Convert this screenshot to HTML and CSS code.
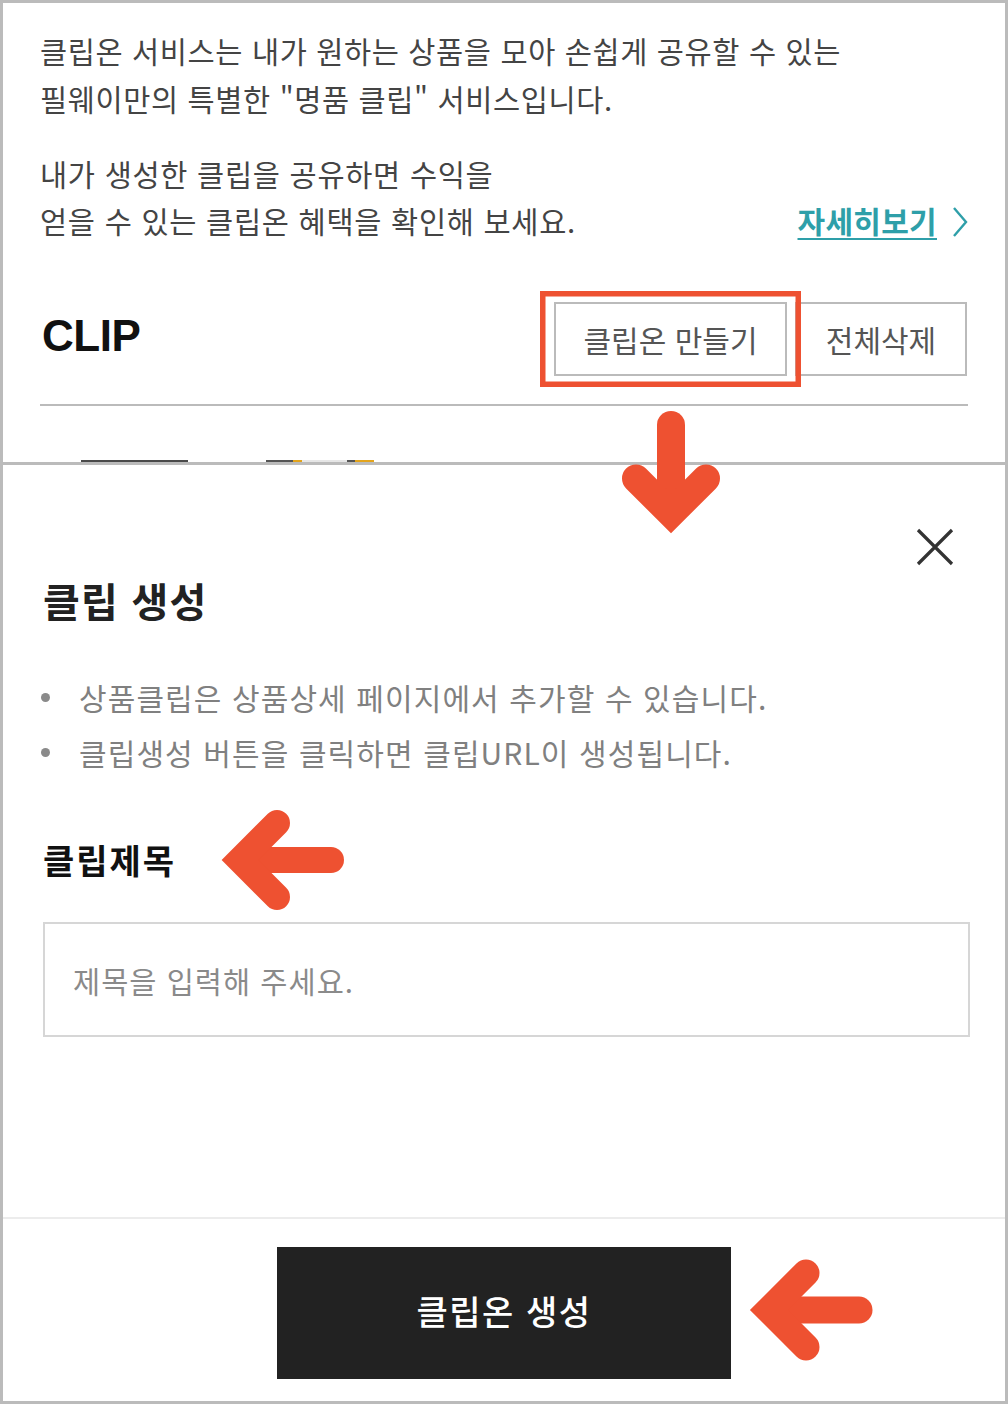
FILE: index.html
```html
<!DOCTYPE html>
<html lang="ko">
<head>
<meta charset="utf-8">
<title>클립온</title>
<link rel="stylesheet" href="styles.css">
</head>
<body>
<div class="frame">
  <section class="top">
    <p class="intro">클립온 서비스는 내가 원하는 상품을 모아 손쉽게 공유할 수 있는<br>필웨이만의 특별한 "명품 클립" 서비스입니다.</p>
    <div class="benefit">
      <p>내가 생성한 클립을 공유하면 수익을<br>얻을 수 있는 클립온 혜택을 확인해 보세요.</p>
      <a class="more" href="#"><span class="more-text">자세히보기</span><svg class="chev" width="16" height="32" viewBox="0 0 16 32"><polyline points="2,2 14,16 2,30" fill="none" stroke="#2e9fa9" stroke-width="2.4"/></svg></a>
    </div>
    <div class="clip-head">
      <h2 class="clip-title">CLIP</h2>
      <div class="clip-btns">
        <button class="line-btn make">클립온 만들기</button>
        <button class="line-btn del">전체삭제</button>
      </div>
    </div>
    <div class="thumbs">
      <span class="thumb t1"></span>
      <span class="thumb t2"></span>
    </div>
  </section>

  <section class="modal">
    <div class="modal-body">
      <div class="modal-head">
        <button class="close" aria-label="닫기"><svg width="38" height="38" viewBox="0 0 38 38"><path d="M2 2 L36 36 M36 2 L2 36" stroke="#333" stroke-width="3.2" fill="none"/></svg></button>
      </div>
      <h2 class="modal-title">클립 생성</h2>
      <ul class="notes">
        <li>상품클립은 상품상세 페이지에서 추가할 수 있습니다.</li>
        <li>클립생성 버튼을 클릭하면 클립URL이 생성됩니다.</li>
      </ul>
      <h3 class="field-label">클립제목</h3>
      <input class="field" type="text" placeholder="제목을 입력해 주세요.">
    </div>
    <div class="modal-foot">
      <button class="create">클립온 생성</button>
    </div>
  </section>

  <svg class="annot" width="1008" height="1404" viewBox="0 0 1008 1404">
    <rect x="542.75" y="293.75" width="255.5" height="90.5" fill="none" stroke="#ee5131" stroke-width="5.5"/>
    <g fill="none" stroke="#ee5131" stroke-linecap="round" stroke-linejoin="miter" stroke-miterlimit="10">
      <path d="M671 425 V505" stroke-width="28"/>
      <path d="M636 478.5 L671 513.5 L706 478.5" stroke-width="28"/>
      <path d="M331 860 H252" stroke-width="26"/>
      <path d="M277 823 L240 860 L277 897" stroke-width="26"/>
      <path d="M859 1310 H782" stroke-width="27"/>
      <path d="M806 1273 L769 1310 L806 1347" stroke-width="27"/>
    </g>
  </svg>
</div>
</body>
</html>
```

FILE: styles.css
```css
* { box-sizing: border-box; }

html, body {
  margin: 0;
  padding: 0;
  background: #ffffff;
}

body {
  font-family: "Noto Sans CJK KR", "Noto Sans", sans-serif;
  color: #444;
}

.frame {
  position: relative;
  width: 1008px;
  height: 1404px;
  border: 3px solid #bbbbbb;
  display: flex;
  flex-direction: column;
  overflow: hidden;
}

/* ---------- top panel ---------- */
.top {
  height: 462px;
  flex: none;
  overflow: hidden;
  border-bottom: 3px solid #bbbbbb;
  padding: 23px 37px 0 37px;
}

.intro {
  margin: 0;
  font-size: 29.5px;
  line-height: 48px;
  color: #444;
  letter-spacing: 0.6px;
}

.benefit {
  margin-top: 28px;
  display: flex;
  justify-content: space-between;
  align-items: flex-end;
}

.benefit p {
  margin: 0;
  font-size: 29.5px;
  line-height: 47px;
  color: #444;
  letter-spacing: 0.7px;
}

.more {
  display: flex;
  align-items: center;
  gap: 15px;
  height: 47px;
  text-decoration: none;
  color: #2e9fa9;
}

.more-text {
  font-size: 30px;
  font-weight: 700;
  line-height: 47px;
  letter-spacing: 0.3px;
  text-decoration: underline;
  text-decoration-thickness: 2px;
  text-underline-offset: 5px;
}

.chev { display: block; margin-top: 2px; }

.clip-head {
  margin-top: 58px;
  display: flex;
  justify-content: space-between;
  align-items: flex-start;
  height: 74px;
}

.clip-title {
  margin: 0 0 0 2px;
  font-family: "Liberation Sans", Arial, sans-serif;
  font-weight: 700;
  font-size: 44px;
  line-height: 68px;
  letter-spacing: -0.5px;
  color: #111;
}

.clip-btns {
  display: flex;
  gap: 8px;
  margin-right: 1px;
}

.line-btn {
  height: 74px;
  border: 2px solid #bbbbbb;
  background: #fff;
  font-family: "Noto Sans CJK KR", sans-serif;
  font-size: 30px;
  color: #555;
  padding: 0;
  cursor: pointer;
}

.line-btn.make { width: 233px; }
.line-btn.del { width: 172px; }

.thumbs {
  margin-top: 28px;
  border-top: 2px solid #bbbbbb;
  padding: 54px 0 0 41px;
  display: flex;
  gap: 78px;
}

.thumb {
  display: block;
  width: 107px;
  height: 60px;
  background: #4a4a4a;
}

.thumb.t2 {
  width: 108px;
  background: linear-gradient(90deg, #555 0 25%, #e3a41c 25% 33%, #e6e6e6 33% 75%, #555 75% 82%, #e3a41c 82% 100%);
}

/* ---------- modal panel ---------- */
.modal {
  flex: 1;
  display: flex;
  flex-direction: column;
}

.modal-body {
  flex: 1;
  padding: 63px 35px 0 40px;
}

.modal-head {
  display: flex;
  justify-content: flex-end;
  padding-right: 16px;
}

.close {
  width: 38px;
  height: 38px;
  padding: 0;
  border: 0;
  background: none;
  display: block;
}

.close svg { display: block; }

.modal-title {
  margin: 6px 0 0;
  font-size: 40px;
  font-weight: 700;
  line-height: 56px;
  letter-spacing: 1.2px;
  color: #222;
}

.notes {
  list-style: none;
  margin: 42px 0 0;
  padding: 0;
}

.notes li {
  display: flex;
  align-items: center;
  font-size: 30px;
  line-height: 55px;
  color: #808080;
  letter-spacing: 1.1px;
}

.notes li::before {
  content: "";
  flex: none;
  width: 9px;
  height: 9px;
  border-radius: 50%;
  background: #8a8a8a;
  margin: 0 29px 0 -2px;
}

.field-label {
  margin: 55px 0 0;
  font-size: 34px;
  font-weight: 700;
  line-height: 50px;
  letter-spacing: 2px;
  color: #111;
}

.field {
  display: block;
  margin-top: 37px;
  width: 927px;
  height: 115px;
  border: 2px solid #d6d6d6;
  padding: 0 0 0 28px;
  font-family: "Noto Sans CJK KR", sans-serif;
  font-size: 29.5px;
  letter-spacing: 1px;
  color: #333;
  background: #fff;
  outline: none;
}

.field::placeholder { color: #8a8a8a; }

.modal-foot {
  flex: none;
  border-top: 2px solid #ececec;
  padding: 28px 0 22px;
  display: flex;
  justify-content: center;
}

.create {
  width: 454px;
  height: 132px;
  border: 0;
  background: #222222;
  color: #ffffff;
  font-family: "Noto Sans CJK KR", sans-serif;
  font-size: 34px;
  font-weight: 500;
  letter-spacing: 1.5px;
  padding: 0 0 5px;
}

/* ---------- annotations overlay ---------- */
.annot {
  position: absolute;
  left: -3px;
  top: -3px;
  pointer-events: none;
}
```
